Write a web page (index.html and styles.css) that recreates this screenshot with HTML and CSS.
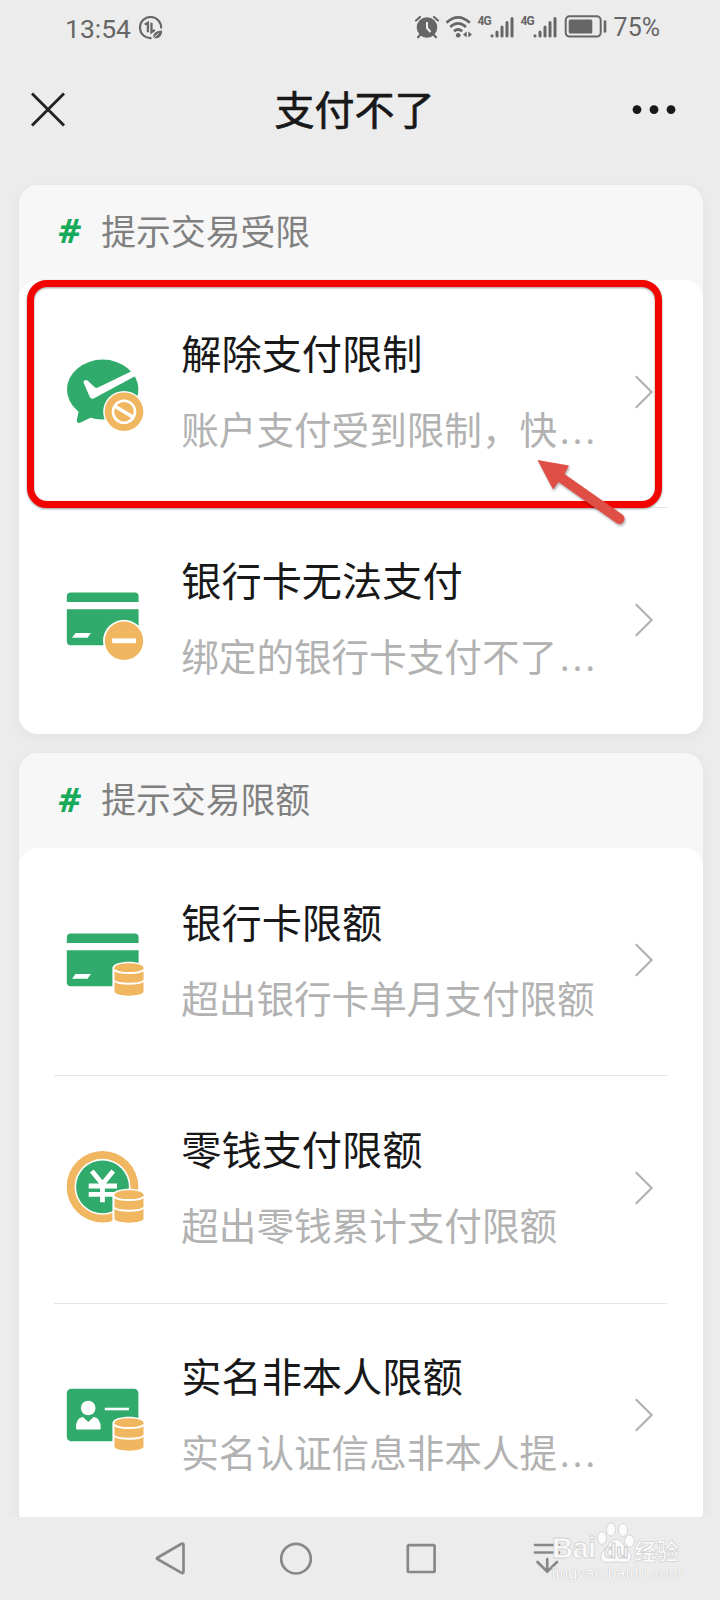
FILE: index.html
```html
<!DOCTYPE html>
<html lang="zh-CN">
<head>
    <meta charset="UTF-8">
    <meta name="viewport" content="width=device-width, initial-scale=1.0">
    <title>支付不了</title>
    <link rel="stylesheet" href="styles.css">
</head>
<body>
    <!-- shared icon parts -->
    <svg class="defs" width="0" height="0">
        <symbol id="coins" viewBox="0 0 90 90">
            <path d="M52.4 51C52.4 42.5 85.6 42.5 85.6 51V80H52.4Z" fill="#fff"/>
            <path d="M54.5 51V74.5C54.5 80 83.5 80 83.5 74.5V51Z" fill="#f0b660"/>
            <ellipse cx="69" cy="51" rx="14.5" ry="4.8" fill="#f0b660"/>
            <path d="M54 52.5C57 57.3 81 57.3 84 52.5M54 63.5C57 67.8 81 67.8 84 63.5" fill="none" stroke="#fff" stroke-width="2"/>
        </symbol>
        <symbol id="card" viewBox="0 0 90 90">
            <path d="M6.8 26V20.5Q6.8 16.5 10.8 16.5H74.6Q78.6 16.5 78.6 20.5V26ZM6.8 33.2H78.6V69.3H10.8Q6.8 69.3 6.8 65.3Z" fill="#31ab6b"/>
            <path d="M15.5 57H31L27.5 61.8H12Z" fill="#fff"/>
        </symbol>
        <symbol id="chevron" viewBox="0 0 20 36">
            <path d="M1.8 2.3L17.6 18L1.8 33.7" fill="none" stroke="#b2b2b2" stroke-width="2.2"/>
        </symbol>
    </svg>

    <div class="phone">
        <div class="status-bar">
            <div class="status-left">
                <span class="time">13:54</span>
                <svg width="25" height="25" viewBox="0 0 26 26" fill="none" stroke="#666">
                    <path d="M24 14A11 11 0 1 0 14 24" stroke-width="2.2"/>
                    <path d="M7 10L10.3 8V18M14 8V18L17.5 15.5" stroke-width="2.4"/>
                    <path d="M16 24C15 17 21 16.5 25 16C25.5 21 22 25.5 16 24Z" fill="#666" stroke="none"/>
                    <path d="M15 25L21.5 19" stroke="#ececec" stroke-width="1"/>
                </svg>
            </div>
            <div class="status-right">
                <svg width="26" height="26" viewBox="0 0 26 26">
                    <circle cx="13" cy="13.5" r="10.3" fill="#666"/>
                    <path d="M6.5 20.5L4 23.3M19.5 20.5L22 23.3M2 6.5L6 3M24 6.5L20 3" stroke="#666" stroke-width="2.2" stroke-linecap="round"/>
                    <path d="M13 8V14L16.5 18" fill="none" stroke="#ececec" stroke-width="2"/>
                </svg>
                <svg class="wifi" width="28" height="26" viewBox="0 0 28 26" fill="none" stroke="#666" stroke-width="2.7">
                    <path d="M1.5 8.7Q13 -2.1 24.8 8.7M5.2 13Q13 5.8 21 13M9 17.3Q13 13.7 17.2 17.3"/>
                    <circle cx="13.2" cy="21.3" r="2.3" fill="#666" stroke="none"/>
                    <path d="M21.7 17.5V23.5L18 20.5ZM23.3 17.5V23.5L27 20.5Z" fill="#666" stroke="none"/>
                </svg>
                <div class="signal">
                    <span class="net">4G</span>
                    <svg width="24" height="24" viewBox="0 0 24 24" stroke="#666" stroke-width="3" stroke-linecap="round">
                        <path d="M2 20.8V21M7 17V21M12 12V21M17 7.5V21M22 3.5V21"/>
                    </svg>
                </div>
                <div class="signal">
                    <span class="net">4G</span>
                    <svg width="24" height="24" viewBox="0 0 24 24" stroke="#666" stroke-width="3" stroke-linecap="round">
                        <path d="M2 20.8V21M7 17V21M12 12V21M17 7.5V21M22 3.5V21"/>
                    </svg>
                </div>
                <svg class="battery" width="44" height="24" viewBox="0 0 44 24">
                    <rect x="1.7" y="1.2" width="35" height="20.4" rx="4" fill="none" stroke="#666" stroke-width="2"/>
                    <rect x="4.7" y="4.5" width="23.6" height="14" rx="1.5" fill="#666"/>
                    <path d="M41 6.5V16.5" stroke="#666" stroke-width="2.6" stroke-linecap="round"/>
                </svg>
                <span class="percent">75%</span>
            </div>
        </div>

        <div class="nav-bar">
            <svg width="36" height="36" viewBox="0 0 36 36">
                <path d="M2 1.5L34 33.5M34 1.5L2 33.5" stroke="#222" stroke-width="2.9"/>
            </svg>
            <h1>支付不了</h1>
            <svg width="44" height="12" viewBox="0 0 44 12" fill="#181818">
                <circle cx="5" cy="5.6" r="4.4"/>
                <circle cx="22" cy="5.6" r="4.4"/>
                <circle cx="39" cy="5.6" r="4.4"/>
            </svg>
        </div>

        <div class="content">
            <div class="card">
                <h2><span class="hash">#</span>提示交易受限</h2>
                <div class="list">
                    <div class="item marked">
                        <svg class="icon" viewBox="0 0 90 90">
                            <ellipse cx="42.7" cy="41.6" rx="35.7" ry="30" fill="#31ab6b"/>
                            <path d="M19.5 60L16.7 72.5Q16.8 75.6 20 74.8L31 69.5Z" fill="#31ab6b"/>
                            <path d="M23.3 34Q25 30.5 28 33L35 39.6Q36.5 40.2 38 39.6L71.5 23.2L76.8 27.2L35 49.8Q31.5 52.2 29.8 49Z" fill="#fff"/>
                            <circle cx="64" cy="63.7" r="20.8" fill="#fff"/>
                            <circle cx="64" cy="63.7" r="19.3" fill="#f0b660"/>
                            <circle cx="64" cy="63.7" r="11" fill="none" stroke="#fff" stroke-width="2.6"/>
                            <path d="M55 58.3L73.3 69.3" stroke="#fff" stroke-width="3.6"/>
                        </svg>
                        <div class="text">
                            <h3>解除支付限制</h3>
                            <p>账户支付受到限制，快<span class="dots">...</span></p>
                        </div>
                        <svg class="chevron"><use href="#chevron"/></svg>
                        <div class="red-box"></div>
                        <svg class="red-arrow" width="100" height="80" viewBox="0 0 100 80">
                            <path d="M7.5 10L39 15.5L34.5 24L92.7 64.8A5.2 5.2 0 0 1 86.7 73.2L28.5 32L23 39.5Z" fill="#e04f45"/>
                        </svg>
                    </div>
                    <div class="item">
                        <svg class="icon" viewBox="0 0 90 90">
                            <use href="#card"/>
                            <circle cx="64" cy="64.8" r="21" fill="#fff"/>
                            <circle cx="64" cy="64.8" r="19.2" fill="#f0b660"/>
                            <path d="M52.2 64.8H76" stroke="#fff" stroke-width="4.8"/>
                        </svg>
                        <div class="text">
                            <h3>银行卡无法支付</h3>
                            <p>绑定的银行卡支付不了<span class="dots">...</span></p>
                        </div>
                        <svg class="chevron"><use href="#chevron"/></svg>
                    </div>
                </div>
            </div>

            <div class="card">
                <h2><span class="hash">#</span>提示交易限额</h2>
                <div class="list">
                    <div class="item">
                        <svg class="icon" viewBox="0 0 90 90">
                            <use href="#card"/>
                            <use href="#coins"/>
                        </svg>
                        <div class="text">
                            <h3>银行卡限额</h3>
                            <p>超出银行卡单月支付限额</p>
                        </div>
                        <svg class="chevron"><use href="#chevron"/></svg>
                    </div>
                    <div class="item">
                        <svg class="icon" viewBox="0 0 90 90">
                            <circle cx="42.5" cy="42.8" r="35.8" fill="#f0b660"/>
                            <circle cx="42.5" cy="42.8" r="28" fill="#fff"/>
                            <circle cx="42.5" cy="42.8" r="26.4" fill="#31ab6b"/>
                            <path d="M31.8 27L42.5 40L53.2 27M42.5 39V58.3M28.7 42H57M28.7 50.4H57" fill="none" stroke="#fff" stroke-width="4.8"/>
                            <use href="#coins"/>
                        </svg>
                        <div class="text">
                            <h3>零钱支付限额</h3>
                            <p>超出零钱累计支付限额</p>
                        </div>
                        <svg class="chevron"><use href="#chevron"/></svg>
                    </div>
                    <div class="item">
                        <svg class="icon" viewBox="0 0 90 90">
                            <rect x="6.8" y="16.7" width="71.6" height="52.5" rx="4.5" fill="#31ab6b"/>
                            <circle cx="28.2" cy="36" r="7.3" fill="#fff"/>
                            <path d="M16 56.5Q15.5 46 23 45L28.3 50L33.6 45Q41 46 40.7 56.5Q40.6 57.5 39.5 57.5H17.2Q16 57.5 16 56.5Z" fill="#fff"/>
                            <path d="M44.8 37H69" stroke="#fff" stroke-width="2.6"/>
                            <use href="#coins"/>
                        </svg>
                        <div class="text">
                            <h3>实名非本人限额</h3>
                            <p>实名认证信息非本人提<span class="dots">...</span></p>
                        </div>
                        <svg class="chevron"><use href="#chevron"/></svg>
                    </div>
                </div>
            </div>
        </div>

        <div class="system-nav">
            <svg viewBox="0 0 40 40"><path d="M6.8 18.5L30.5 4.8Q32.5 4 32.5 6V32.6Q32.5 34.6 30.5 33.8L6.8 20.3Q5 19.4 6.8 18.5Z"/></svg>
            <svg viewBox="0 0 40 40"><circle cx="20" cy="19.7" r="14.8"/></svg>
            <svg viewBox="0 0 40 40"><rect x="6.8" y="6.2" width="26.8" height="26.8" rx="1.5"/></svg>
            <svg viewBox="0 0 40 40"><path d="M8 6H32M8 13.5H32M20.2 20V32.5M10.5 23L20.2 32.7L30 23" stroke-linecap="round"/></svg>
        </div>

        <div class="watermark">
            <div class="brand">
                <span class="bai">Bai</span>
                <div class="paw">
                    <svg width="42" height="44" viewBox="0 0 42 44" fill="#fbfbfb" stroke="#d6d6d6">
                        <ellipse cx="6" cy="18" rx="4.6" ry="6.3"/>
                        <ellipse cx="15" cy="9.5" rx="4.6" ry="6.6"/>
                        <ellipse cx="27" cy="10" rx="4.6" ry="6.4"/>
                        <ellipse cx="33.5" cy="21" rx="4.9" ry="6"/>
                        <path d="M20 19.5C26 19.5 27 26 31.5 29.5C39 37 34 43 28 42.5Q20 41 12 42.5C5 43 2 36 8 30C13 26 14 19.5 20 19.5Z"/>
                    </svg>
                    <span class="du">du</span>
                </div>
                <span class="jy">经验</span>
            </div>
            <div class="url">jingyan.baidu.com</div>
        </div>
    </div>
</body>
</html>
```

FILE: styles.css
```css
* {
    box-sizing: border-box;
}
body {
    margin: 0;
    background: #ececec;
    font-family: "Noto Sans CJK SC", "Noto Sans", sans-serif;
}
.defs {
    position: absolute;
}
h1, h2, h3, p {
    margin: 0;
    font-weight: 400;
}
svg {
    display: block;
    flex: none;
}
.phone {
    position: relative;
    display: flex;
    flex-direction: column;
    width: 720px;
    height: 1600px;
    overflow: hidden;
}

/* status bar */
.status-bar {
    display: flex;
    justify-content: space-between;
    height: 54px;
    padding: 13px 60px 0 65px;
    color: #666;
    font-family: Roboto, sans-serif;
}
.status-left, .status-right {
    display: flex;
    align-items: center;
    height: 28px;
}
.status-left {
    gap: 7px;
}
.time {
    padding-top: 2px;
    font-size: 26.5px;
}
.percent {
    margin-left: 6px;
    padding-top: 1px;
    font-size: 25px;
}
.wifi {
    margin-left: 5px;
}
.signal {
    display: flex;
    width: 36px;
    margin-left: 5px;
}
.signal + .signal {
    margin-left: 7px;
}
.net {
    width: 12px;
    font-size: 12px;
    font-weight: 700;
    line-height: 13px;
    letter-spacing: -1px;
}
.battery {
    margin-left: 7px;
}

/* page title */
.nav-bar {
    display: flex;
    align-items: center;
    justify-content: space-between;
    height: 111px;
    padding: 0 44px 0 30px;
}
.nav-bar h1 {
    padding: 0 0 3px 11px;
    color: #181818;
    font-size: 40px;
    line-height: 60px;
    -webkit-text-stroke: 0.7px #181818;
}

/* cards */
.content {
    flex: 1;
    padding: 20px 17.3px 0 19.3px;
    overflow: hidden;
}
.card {
    margin-bottom: 19px;
    background: #f7f7f7;
    border-radius: 19px;
    box-shadow: 0 4px 18px rgba(0,0,0,0.045);
}
.card h2 {
    display: flex;
    align-items: center;
    height: 94.5px;
    padding: 0 0 5px 39px;
    color: #808080;
    font-size: 34.8px;
}
.hash {
    width: 43px;
    color: #16ab5b;
    font-family: "Noto Sans", sans-serif;
    font-style: italic;
    font-weight: 700;
}
.list {
    background: #fff;
    border-radius: 19px;
}
.item {
    position: relative;
    display: flex;
    align-items: center;
    height: 227.4px;
    padding: 0 49px 0 41px;
}
/* hairline between rows */
.item + .item::before {
    content: "";
    position: absolute;
    top: 0;
    left: 35px;
    right: 36px;
    border-top: 1px solid #e5e5e5;
}
.icon {
    width: 90px;
    height: 90px;
}
.item:not(.marked) .icon {
    margin-top: 1px;
}
.text {
    flex: 1;
    margin-left: 31px;
    padding-bottom: 7px;
    white-space: nowrap;
}
.text h3 {
    color: #181818;
    font-size: 40.2px;
    line-height: 56px;
}
.text p {
    margin-top: 22px;
    color: #b2b2b2;
    font-size: 37.6px;
    line-height: 52px;
}
.dots {
    margin-left: 3px;
    font-size: 34px;
    letter-spacing: 3.3px;
}
.chevron {
    width: 20px;
    height: 36px;
    margin-bottom: 2px;
}
.marked {
    z-index: 1;
}
.red-box {
    position: absolute;
    top: 0.2px;
    left: 7.3px;
    width: 635px;
    height: 228px;
    border: 7px solid #f20500;
    border-radius: 20px;
    filter: drop-shadow(0 1px 1px rgba(0,0,0,0.4));
}
.red-arrow {
    position: absolute;
    top: 170.5px;
    left: 510.7px;
    filter: drop-shadow(1px 2px 1px rgba(0,0,0,0.3));
}

/* bottom keys */
.system-nav {
    position: relative;
    display: grid;
    grid-template-columns: repeat(4, 125.3px);
    justify-items: center;
    height: 83px;
    padding: 22px 0 0 108px;
    background: #ececec;
}
.system-nav svg {
    width: 40px;
    height: 40px;
    fill: none;
    stroke: #888;
    stroke-width: 2.7;
}

/* corner mark */
.watermark {
    position: absolute;
    left: 552px;
    top: 1520px;
    width: 132px;
    color: #fbfbfb;
    white-space: nowrap;
}
.brand {
    display: flex;
    align-items: flex-end;
    height: 44px;
}
.bai, .du {
    font-family: "Liberation Sans", sans-serif;
    font-weight: 700;
}
.bai {
    width: 44px;
    font-size: 29px;
    line-height: 32px;
    letter-spacing: -0.5px;
    -webkit-text-stroke: 0.8px #d2d2d2;
}
.paw {
    position: relative;
    width: 38px;
}
.du {
    position: absolute;
    left: 8px;
    top: 21px;
    font-size: 20px;
    line-height: 20px;
    -webkit-text-stroke: 1px #cacaca;
}
.jy {
    font-size: 22.5px;
    font-weight: 700;
    line-height: 26px;
    margin-bottom: 1px;
    -webkit-text-stroke: 0.7px #d2d2d2;
}
.url {
    font-family: "Liberation Sans", sans-serif;
    font-size: 15.5px;
    line-height: 18px;
    letter-spacing: 0.3px;
    text-shadow: 0 0 1px #bbb, 0 0 1px #ccc;
}
```
